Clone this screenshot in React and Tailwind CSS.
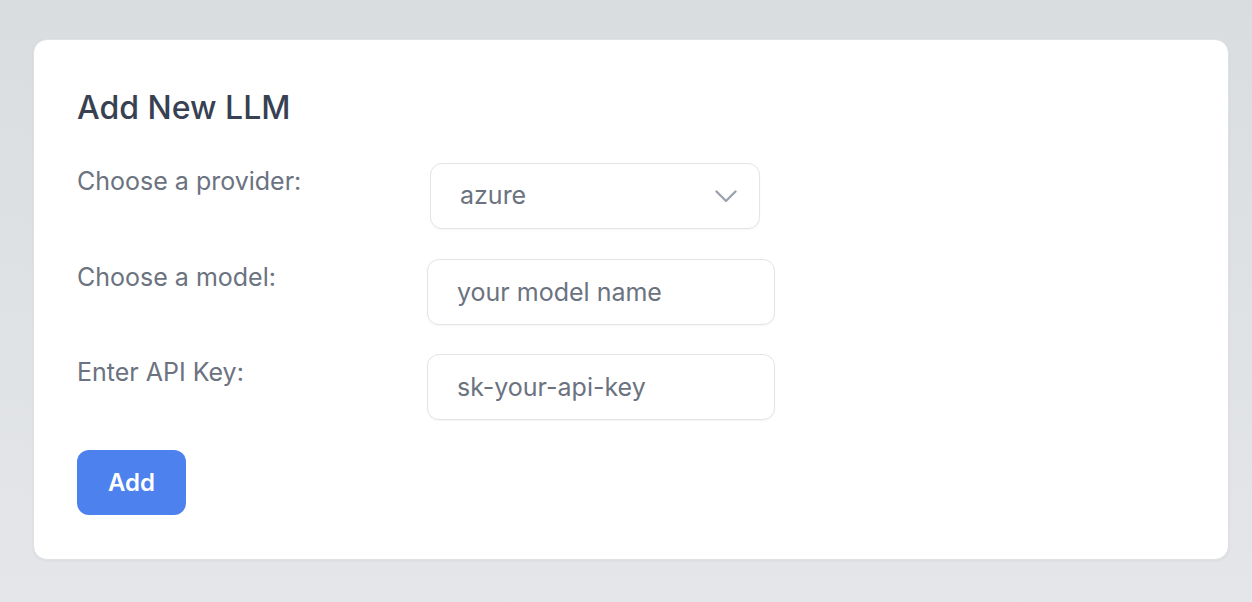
import React, { useState } from 'react';

const labelCls = 'w-[350px] shrink-0 mt-[3px] text-[25px] leading-[30px] text-[#6b7280]';
const inputCls =
  'w-[348px] h-[66px] px-[29px] rounded-[12px] border border-[#e2e4e8] bg-white text-[25px] text-[#6b7280] placeholder:text-[#6b7280] shadow-[0_1px_2px_rgba(0,0,0,0.04)] outline-none';

export default function App() {
  const [provider, setProvider] = useState('azure');
  const [model, setModel] = useState('');
  const [apiKey, setApiKey] = useState('');

  return (
    <div className="min-h-[602px] w-full bg-gradient-to-b from-[#dadddf] to-[#e4e6e9] pt-[39px] pl-[33px] pr-[23px] font-['Inter',sans-serif]">
      <div className="w-[1196px] h-[521px] rounded-[14px] border border-[#dfe1e4] bg-white pt-[48px] pl-[43px] shadow-[0_1px_3px_rgba(0,0,0,0.05)]">
        <h2 className="text-[32px] leading-[40px] font-medium text-[#374151]">Add New LLM</h2>

        <div className="mt-[35px] flex flex-col gap-[29.5px]">
          <div className="flex items-start">
            <label className={labelCls}>Choose a provider:</label>
            <div className="relative ml-[3px] w-[330px] h-[66px] rounded-[12px] border border-[#e2e4e8] bg-white shadow-[0_1px_2px_rgba(0,0,0,0.04)] flex items-center pl-[29px] pr-[22px]">
              <span className="flex-1 text-[25px] text-[#6b7280]">{provider}</span>
              <svg width="22" height="13" viewBox="0 0 22 13" fill="none" className="text-[#9ca3af]">
                <path d="M1.5 1.5 L11 11 L20.5 1.5" stroke="currentColor" strokeWidth="2.4" strokeLinecap="round" strokeLinejoin="round" />
              </svg>
              <select
                value={provider}
                onChange={e => setProvider(e.target.value)}
                className="absolute inset-0 opacity-0 cursor-pointer"
              >
                <option value="azure">azure</option>
                <option value="openai">openai</option>
                <option value="anthropic">anthropic</option>
              </select>
            </div>
          </div>

          <div className="flex items-start">
            <label className={labelCls}>Choose a model:</label>
            <input value={model} onChange={e => setModel(e.target.value)} placeholder="your model name" className={inputCls} />
          </div>

          <div className="flex items-start">
            <label className={labelCls}>Enter API Key:</label>
            <input value={apiKey} onChange={e => setApiKey(e.target.value)} placeholder="sk-your-api-key" className={inputCls} />
          </div>
        </div>

        <button className="mt-[30px] w-[109px] h-[65px] rounded-[12px] bg-[#4d81ee] text-white text-[24px] font-semibold">
          Add
        </button>
      </div>
    </div>
  );
}
